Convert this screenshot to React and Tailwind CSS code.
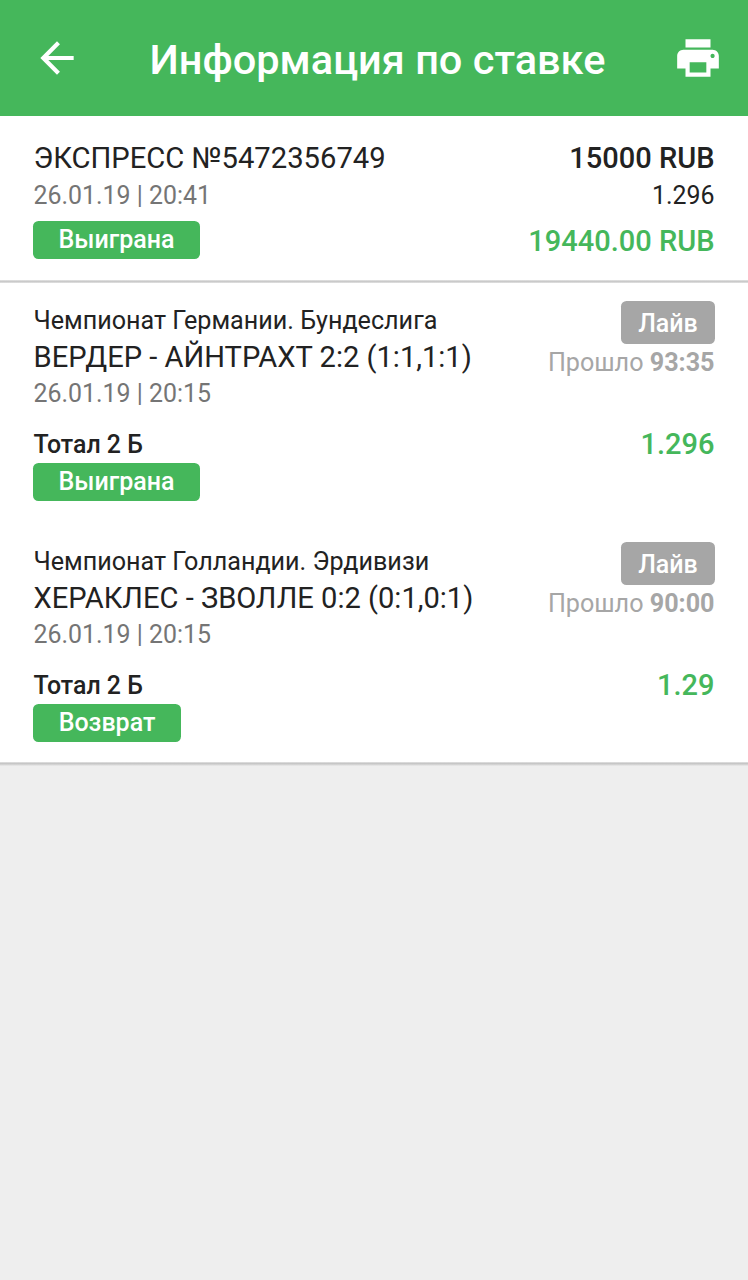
function Badge({ children, className }) {
  return (
    <div className={`flex h-[37.5px] items-center justify-center rounded-[5.5px] bg-[#45b75b] pt-[1px] text-[25px] font-medium leading-9 text-white ${className}`}>
      <span className="whitespace-nowrap">{children}</span>
    </div>
  );
}

function Match({ league, teams, date, elapsed, odds, status, statusClass, className }) {
  return (
    <section className={`flex justify-between pl-[33.5px] pr-[33.5px] ${className}`}>
      <div className="flex flex-col items-start whitespace-nowrap">
        <div className="mt-[19px] h-9 text-[25.15px] leading-[37px] text-[#222]">{league}</div>
        <div className="h-[37px] text-[29.1px] leading-[38px] text-[#222]">{teams}</div>
        <div className="h-[37px] text-[24.9px] leading-[37px] text-[#757575]">{date}</div>
        <div className="mt-[15px] h-9 text-[24.9px] font-medium leading-9 text-[#222]">Тотал 2 Б</div>
        <Badge className={`-ml-[0.5px] ${statusClass}`}>{status}</Badge>
      </div>
      <div className="flex flex-col items-end whitespace-nowrap">
        <div className="-mr-[0.5px] mt-[18px] flex h-[42.5px] w-[94px] items-center justify-center rounded-[5.5px] bg-[#a6a6a6] pt-[3px] text-[25px] font-medium text-white">Лайв</div>
        <div className="mt-[0.5px] h-[37px] text-[25.15px] leading-[37px] text-[#a6a6a6]">Прошло <span className="font-bold">{elapsed}</span></div>
        <div className="mt-[45px] h-9 text-[29px] font-medium leading-9 text-[#45b75b]">{odds}</div>
      </div>
    </section>
  );
}

export default function App() {
  return (
    <div className="h-[1280px] w-[748px] overflow-hidden bg-[#eee] font-['Roboto',sans-serif]">
      <header className="flex h-[116px] items-center justify-between bg-[#45b75b] pl-[32px] pr-[25px] text-white">
        <svg className="h-[50px] w-[50px]" viewBox="0 0 24 24" fill="currentColor"><path d="M20 11H7.83l5.59-5.59L12 4l-8 8 8 8 1.41-1.41L7.83 13H20v-2z" /></svg>
        <h1 className="whitespace-nowrap pt-[5px] text-[41.5px] font-medium">Информация по ставке</h1>
        <svg className="h-[50px] w-[50px]" viewBox="0 0 24 24" fill="currentColor"><path d="M19 8H5c-1.66 0-3 1.34-3 3v6h4v4h12v-4h4v-6c0-1.66-1.34-3-3-3zm-3 11H8v-5h8v5zm3-7c-.55 0-1-.45-1-1s.45-1 1-1 1 .45 1 1-.45 1-1 1zm-1-9H6v4h12V3z" /></svg>
      </header>
      <section className="flex h-[164px] justify-between bg-white px-[33.5px]">
        <div className="flex flex-col items-start whitespace-nowrap">
          <div className="mt-[24px] h-[37px] text-[29.2px] leading-[37px] text-[#222]">ЭКСПРЕСС №5472356749</div>
          <div className="h-9 text-[24.9px] leading-[37px] text-[#757575]">26.01.19 | 20:41</div>
          <Badge className="-ml-[0.5px] mt-[8px] w-[167px]">Выиграна</Badge>
        </div>
        <div className="flex flex-col items-end whitespace-nowrap">
          <div className="mt-[24px] h-[37px] text-[29px] font-medium leading-[37px] text-[#222]">15000 RUB</div>
          <div className="h-9 text-[24.9px] leading-[37px] text-[#222]">1.296</div>
          <div className="mt-[10px] h-9 text-[29px] font-medium leading-[37px] text-[#45b75b]">19440.00 RUB</div>
        </div>
      </section>
      <div className="h-[4px] bg-linear-to-b from-[#e4e4e4] via-[#c8c8c8] via-40% to-[#fafafa]" />
      <main className="-mt-px bg-white">
        <Match className="h-[241px]" league="Чемпионат Германии. Бундеслига" teams="ВЕРДЕР - АЙНТРАХТ 2:2 (1:1,1:1)" date="26.01.19 | 20:15" elapsed="93:35" odds="1.296" status="Выиграна" statusClass="w-[167px]" />
        <Match className="h-[238px]" league="Чемпионат Голландии. Эрдивизи" teams="ХЕРАКЛЕС - ЗВОЛЛЕ 0:2 (0:1,0:1)" date="26.01.19 | 20:15" elapsed="90:00" odds="1.29" status="Возврат" statusClass="w-[148px]" />
      </main>
      <div className="h-[4px] bg-linear-to-b from-[#e4e4e4] via-[#c4c4c4] via-40% to-[#ececec]" />
    </div>
  );
}
